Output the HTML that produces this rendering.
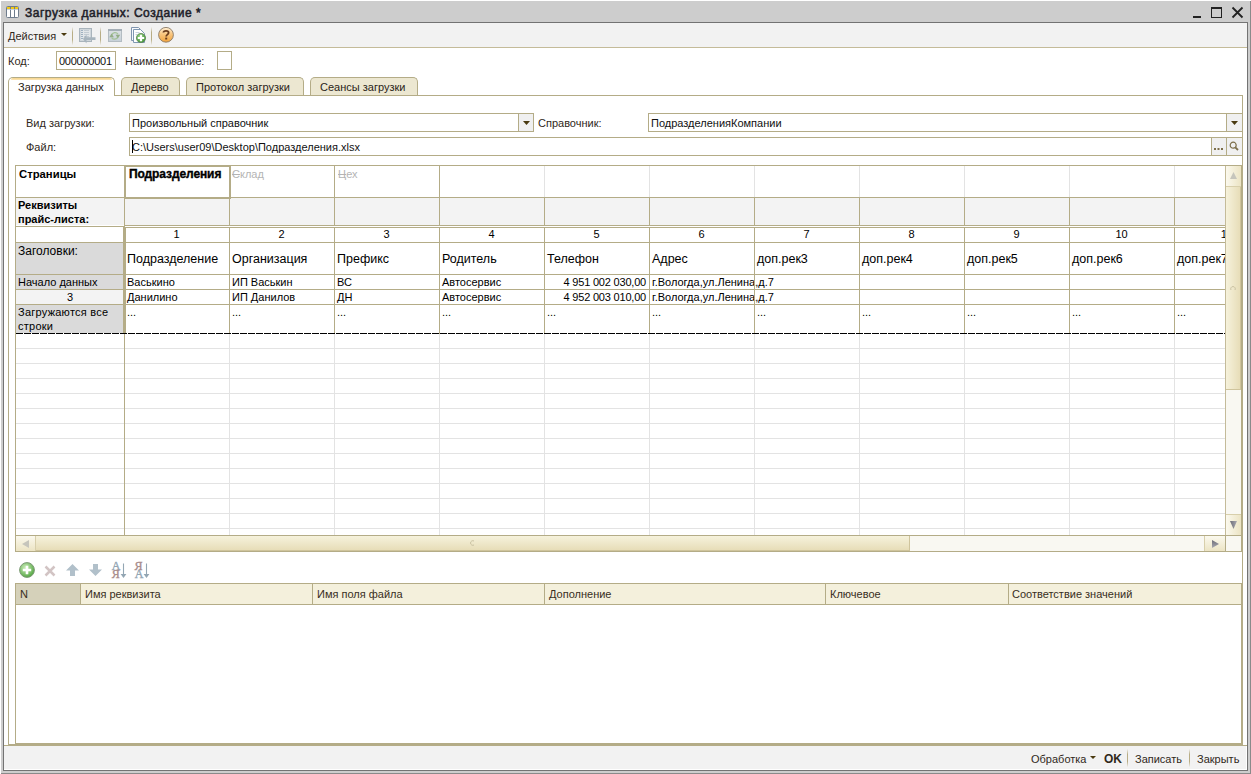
<!DOCTYPE html>
<html><head><meta charset="utf-8"><style>
html,body{margin:0;padding:0}
body{width:1251px;height:774px;position:relative;overflow:hidden;background:#fff;font-family:"Liberation Sans", sans-serif}
body>div,body>svg{position:absolute}
</style></head><body>
<div style="left:1px;top:1px;width:1250px;height:773px;background:#cdcdcd"></div>
<div style="left:1250px;top:1px;width:1px;height:773px;background:#8a8a8a"></div>
<div style="left:1px;top:773px;width:1250px;height:1px;background:#8a8a8a"></div>
<div style="left:3px;top:22px;width:1245px;height:749px;background:#fff;border:1px solid #737373;box-sizing:border-box"></div>
<svg style="left:6px;top:6px" width="13" height="12" viewBox="0 0 13 12">
<rect x="0.5" y="0.5" width="12" height="11" rx="1" fill="#fff" stroke="#6f7d8d"/>
<path d="M4.5 0.5V11.5M8.5 0.5V11.5" stroke="#6f7d8d"/>
<rect x="1" y="1" width="3" height="2" fill="#f2c814"/>
<rect x="5" y="1" width="3" height="2" fill="#f2c814"/>
<rect x="9" y="1" width="3" height="2" fill="#f2c814"/>
<rect x="1" y="3" width="11" height="0.8" fill="#b9c6d6"/>
</svg>
<div style="left:25px;top:6.84px;font-size:12px;line-height:12px;font-weight:normal;color:#202028;white-space:pre;-webkit-text-stroke:0.5px #202028;letter-spacing:0.52px;">Загрузка данных: Создание *</div>
<div style="left:1193px;top:16px;width:8px;height:2px;background:#222"></div>
<div style="left:1211px;top:7px;width:11px;height:11px;border:1px solid #222;border-top-width:2px;box-sizing:border-box"></div>
<svg style="left:1231px;top:6px" width="13" height="13" viewBox="0 0 13 13">
<path d="M1.5 1.5 L11.5 11.5 M11.5 1.5 L1.5 11.5" stroke="#222" stroke-width="1.8"/></svg>
<div style="left:4px;top:23px;width:1243px;height:24px;background:#f2f2f2"></div>
<div style="left:4px;top:47px;width:1243px;height:1px;background:#c4bb99"></div>
<div style="left:8px;top:30.69px;font-size:11px;line-height:11px;font-weight:normal;color:#30281a;white-space:pre;">Действия</div>
<svg style="left:61px;top:33px" width="6" height="3"><path d="M0 0H6L3 3Z" fill="#4a3a10"/></svg>
<div style="left:72px;top:27px;width:1px;height:18px;background:linear-gradient(#f0f0f0,#b8ad85 30%,#b8ad85 70%,#f0f0f0)"></div>
<div style="left:100px;top:27px;width:1px;height:18px;background:linear-gradient(#f0f0f0,#b8ad85 30%,#b8ad85 70%,#f0f0f0)"></div>
<div style="left:151px;top:27px;width:1px;height:18px;background:linear-gradient(#f0f0f0,#b8ad85 30%,#b8ad85 70%,#f0f0f0)"></div>
<svg style="left:76px;top:25px" width="22" height="20" viewBox="0 0 22 20">
<rect x="3.5" y="3.5" width="12" height="13" fill="#e2e6e9" stroke="#a9b4bc"/>
<rect x="4.5" y="4.5" width="10" height="11" fill="none" stroke="#d0d7dc"/>
<path d="M5 5.5h2M5 7.5h2M5 9.5h2M5 11.5h2M5 13.5h2" stroke="#9fb1c1"/>
<path d="M8 5.5h5M8 7.5h5M8 9.5h5M8 11.5h5" stroke="#c2cbd2"/>
<path d="M7 14 L10.5 9.5 V12.3 H19.5 V15 H10.5 V18.5 Z" fill="#a7b4bd"/>
</svg>
<svg style="left:107px;top:28px" width="16" height="15" viewBox="0 0 16 15">
<defs><linearGradient id="rg" x1="0" y1="0" x2="0" y2="1"><stop offset="0" stop-color="#dde2e5"/><stop offset="1" stop-color="#c6d0d8"/></linearGradient></defs>
<rect x="1.5" y="1.5" width="13" height="12" fill="url(#rg)" stroke="#b3bcc2"/>
<rect x="1" y="1" width="14" height="2" fill="#a4aeb6"/>
<path d="M4.6 7.2 A3.6 3.6 0 0 1 11 6.2" stroke="#a5c39a" stroke-width="1.2" fill="none"/>
<path d="M11 8.8 A3.6 3.6 0 0 1 4.6 9.6" stroke="#a5c39a" stroke-width="1.2" fill="none"/>
<path d="M2.3 9.2 L4.6 5.6 L6.9 9.2 Z" fill="#93ad86"/>
<path d="M8.5 6.8 L10.9 10.3 L13.2 6.8 Z" fill="#93ad86"/>
</svg>
<svg style="left:130px;top:26px" width="17" height="18" viewBox="0 0 17 18">
<path d="M1.5 1.5H8.5L10.5 3.5V14.5H1.5Z" fill="#f7f9fc" stroke="#8095ae"/>
<path d="M3.5 3.5H10.5L14.5 7.5V16.5H3.5Z" fill="#fff" stroke="#7f98b2"/>
<path d="M5.5 6.5h4M5.5 8.5h2" stroke="#c9d3de"/>
<defs><radialGradient id="cg" cx="40%" cy="35%" r="70%"><stop offset="0" stop-color="#9fd68a"/><stop offset="1" stop-color="#3c9233"/></radialGradient></defs>
<circle cx="11" cy="12" r="4.6" fill="url(#cg)" stroke="#5f8557" stroke-width="0.8"/>
<path d="M11 8.8V15.2M7.8 12H14.2" stroke="#fff" stroke-width="2.2"/>
</svg>
<svg style="left:158px;top:27px" width="16" height="16" viewBox="0 0 16 16">
<defs><linearGradient id="og" x1="0" y1="0" x2="0" y2="1"><stop offset="0" stop-color="#fff0d6"/><stop offset="0.45" stop-color="#f9c680"/><stop offset="1" stop-color="#f2a33c"/></linearGradient></defs>
<circle cx="8" cy="7.8" r="7.4" fill="url(#og)" stroke="#8b7a66" stroke-width="0.9"/>
<path d="M5.4 5.6 C5.4 3.4 10.6 3.2 10.6 5.8 C10.6 7.6 8.2 7.6 8.2 9.4" stroke="#6b3c1c" stroke-width="1.8" fill="none"/>
<rect x="7.2" y="10.6" width="2" height="1.9" fill="#6b3c1c"/>
</svg>
<div style="left:8px;top:55.69px;font-size:11px;line-height:11px;font-weight:normal;color:#30281a;white-space:pre;">Код:</div>
<div style="left:56px;top:51px;width:60px;height:19px;border:1px solid #b4ac87;box-sizing:border-box;background:#fff"></div>
<div style="left:59px;top:55.69px;font-size:11px;line-height:11px;font-weight:normal;color:#111;white-space:pre;letter-spacing:-0.25px;">000000001</div>
<div style="left:125px;top:55.69px;font-size:11px;line-height:11px;font-weight:normal;color:#30281a;white-space:pre;">Наименование:</div>
<div style="left:217px;top:51px;width:15px;height:19px;border:1px solid #b4ac87;box-sizing:border-box;background:#fff"></div>
<div style="left:8px;top:95px;width:1235px;height:1px;background:#b4ac87"></div>
<div style="left:8px;top:77px;width:107px;height:19px;box-sizing:border-box;border:1px solid #b4ac87;border-bottom:none;border-radius:5px 5px 0 0;background:#fff;z-index:2"></div>
<div style="left:11px;top:78px;width:101px;height:2px;background:linear-gradient(#f7d48a,#fbe6b8);border-radius:3px 3px 0 0;z-index:3"></div>
<div style="left:18px;top:81.69px;font-size:11px;line-height:11px;font-weight:normal;color:#2a2418;white-space:pre;z-index:4;">Загрузка данных</div>
<div style="left:9px;top:95px;width:105px;height:1px;background:#fff"></div>
<div style="left:121px;top:77px;width:59px;height:18px;box-sizing:border-box;border:1px solid #b4ac87;border-bottom:none;border-radius:5px 5px 0 0;background:#ece7d1;"></div>
<div style="left:131px;top:81.69px;font-size:11px;line-height:11px;font-weight:normal;color:#2a2418;white-space:pre;z-index:4;">Дерево</div>
<div style="left:186px;top:77px;width:118px;height:18px;box-sizing:border-box;border:1px solid #b4ac87;border-bottom:none;border-radius:5px 5px 0 0;background:#ece7d1;"></div>
<div style="left:196px;top:81.69px;font-size:11px;line-height:11px;font-weight:normal;color:#2a2418;white-space:pre;z-index:4;">Протокол загрузки</div>
<div style="left:310px;top:77px;width:108px;height:18px;box-sizing:border-box;border:1px solid #b4ac87;border-bottom:none;border-radius:5px 5px 0 0;background:#ece7d1;"></div>
<div style="left:320px;top:81.69px;font-size:11px;line-height:11px;font-weight:normal;color:#2a2418;white-space:pre;z-index:4;">Сеансы загрузки</div>
<div style="left:8px;top:95px;width:1px;height:650px;background:#b4ac87"></div>
<div style="left:1242px;top:95px;width:1px;height:650px;background:#b4ac87"></div>
<div style="left:8px;top:744px;width:1235px;height:1px;background:#b4ac87"></div>
<div style="left:4px;top:745px;width:1243px;height:1px;background:#b4ac87"></div>
<div style="left:4px;top:746px;width:1242px;height:23px;background:#f2f2f2"></div>
<div style="left:26px;top:117.69px;font-size:11px;line-height:11px;font-weight:normal;color:#30281a;white-space:pre;">Вид загрузки:</div>
<div style="left:129px;top:113px;width:405px;height:19px;border:1px solid #b4ac87;box-sizing:border-box;background:#fff"></div>
<div style="left:518px;top:114px;width:14px;height:17px;border-left:1px solid #b4ac87;background:#f0f0f0"></div>
<svg style="left:523px;top:121px" width="7" height="4"><path d="M0 0H7L3.5 4Z" fill="#4a3a10"/></svg>
<div style="left:132px;top:117.69px;font-size:11px;line-height:11px;font-weight:normal;color:#111;white-space:pre;">Произвольный справочник</div>
<div style="left:538px;top:117.69px;font-size:11px;line-height:11px;font-weight:normal;color:#30281a;white-space:pre;">Справочник:</div>
<div style="left:648px;top:113px;width:595px;height:19px;border:1px solid #b4ac87;box-sizing:border-box;background:#fff"></div>
<div style="left:1226px;top:114px;width:15px;height:17px;border-left:1px solid #b4ac87;background:#f0f0f0"></div>
<svg style="left:1231px;top:121px" width="7" height="4"><path d="M0 0H7L3.5 4Z" fill="#4a3a10"/></svg>
<div style="left:651px;top:117.69px;font-size:11px;line-height:11px;font-weight:normal;color:#111;white-space:pre;">ПодразделенияКомпании</div>
<div style="left:26px;top:141.69px;font-size:11px;line-height:11px;font-weight:normal;color:#30281a;white-space:pre;">Файл:</div>
<div style="left:129px;top:137px;width:1114px;height:19px;border:1px solid #b4ac87;box-sizing:border-box;background:#fff"></div>
<div style="left:1211px;top:138px;width:15px;height:17px;border-left:1px solid #b4ac87;background:#f0f0f0"></div>
<div style="left:1226px;top:138px;width:15px;height:17px;border-left:1px solid #b4ac87;background:#f0f0f0"></div>
<svg style="left:1214px;top:148px" width="10" height="3"><rect x="0" y="0" width="2" height="2" fill="#7d6f4a"/><rect x="3.5" y="0" width="2" height="2" fill="#7d6f4a"/><rect x="7" y="0" width="2" height="2" fill="#7d6f4a"/></svg>
<svg style="left:1229px;top:141px" width="10" height="10" viewBox="0 0 10 10"><circle cx="4.2" cy="4.2" r="3" fill="none" stroke="#7d6f4a" stroke-width="1.2"/><path d="M6.3 6.3L9 9" stroke="#7d6f4a" stroke-width="1.8"/></svg>
<div style="left:132px;top:141.69px;font-size:11px;line-height:11px;font-weight:normal;color:#111;white-space:pre;">C:\Users\user09\Desktop\Подразделения.xlsx</div>
<div style="left:132px;top:140px;width:1px;height:13px;background:#000"></div>
<div style="left:15px;top:165px;width:1227px;height:387px;border:1px solid #b4ac87;box-sizing:border-box;background:#fff"></div>
<div style="left:16px;top:198px;width:1209px;height:27px;background:#f3f3f3"></div>
<div style="left:16px;top:243px;width:108px;height:31px;background:#dadada"></div>
<div style="left:16px;top:275px;width:108px;height:14px;background:#dadada"></div>
<div style="left:16px;top:290px;width:108px;height:14px;background:#f3f3f3"></div>
<div style="left:16px;top:305px;width:108px;height:28px;background:#dadada"></div>
<div style="left:16px;top:348px;width:1209px;height:1px;background:#e3e3e3"></div>
<div style="left:16px;top:363px;width:1209px;height:1px;background:#e3e3e3"></div>
<div style="left:16px;top:378px;width:1209px;height:1px;background:#e3e3e3"></div>
<div style="left:16px;top:393px;width:1209px;height:1px;background:#e3e3e3"></div>
<div style="left:16px;top:408px;width:1209px;height:1px;background:#e3e3e3"></div>
<div style="left:16px;top:423px;width:1209px;height:1px;background:#e3e3e3"></div>
<div style="left:16px;top:438px;width:1209px;height:1px;background:#e3e3e3"></div>
<div style="left:16px;top:453px;width:1209px;height:1px;background:#e3e3e3"></div>
<div style="left:16px;top:468px;width:1209px;height:1px;background:#e3e3e3"></div>
<div style="left:16px;top:483px;width:1209px;height:1px;background:#e3e3e3"></div>
<div style="left:16px;top:498px;width:1209px;height:1px;background:#e3e3e3"></div>
<div style="left:16px;top:513px;width:1209px;height:1px;background:#e3e3e3"></div>
<div style="left:16px;top:528px;width:1209px;height:1px;background:#e3e3e3"></div>
<div style="left:124px;top:334px;width:1px;height:201px;background:#b4ac87"></div>
<div style="left:229px;top:334px;width:1px;height:201px;background:#e3e3e3"></div>
<div style="left:334px;top:334px;width:1px;height:201px;background:#e3e3e3"></div>
<div style="left:439px;top:334px;width:1px;height:201px;background:#e3e3e3"></div>
<div style="left:544px;top:334px;width:1px;height:201px;background:#e3e3e3"></div>
<div style="left:649px;top:334px;width:1px;height:201px;background:#e3e3e3"></div>
<div style="left:754px;top:334px;width:1px;height:201px;background:#e3e3e3"></div>
<div style="left:859px;top:334px;width:1px;height:201px;background:#e3e3e3"></div>
<div style="left:964px;top:334px;width:1px;height:201px;background:#e3e3e3"></div>
<div style="left:1069px;top:334px;width:1px;height:201px;background:#e3e3e3"></div>
<div style="left:1174px;top:334px;width:1px;height:201px;background:#e3e3e3"></div>
<div style="left:16px;top:197px;width:1209px;height:1px;background:#b4ac87"></div>
<div style="left:124px;top:225px;width:1101px;height:1px;background:#b4ac87"></div>
<div style="left:124px;top:227px;width:1101px;height:1px;background:#b4ac87"></div>
<div style="left:16px;top:226px;width:108px;height:1px;background:#b4ac87"></div>
<div style="left:124px;top:225px;width:1px;height:3px;background:#b4ac87"></div>
<div style="left:16px;top:242px;width:1209px;height:1px;background:#b4ac87"></div>
<div style="left:16px;top:274px;width:1209px;height:1px;background:#b4ac87"></div>
<div style="left:16px;top:289px;width:1209px;height:1px;background:#b4ac87"></div>
<div style="left:16px;top:304px;width:1209px;height:1px;background:#b4ac87"></div>
<div style="left:124px;top:166px;width:1px;height:31px;background:#b4ac87"></div>
<div style="left:124px;top:198px;width:1px;height:27px;background:#b4ac87"></div>
<div style="left:124px;top:227px;width:1px;height:107px;background:#b4ac87"></div>
<div style="left:229px;top:166px;width:1px;height:31px;background:#b4ac87"></div>
<div style="left:229px;top:198px;width:1px;height:27px;background:#b4ac87"></div>
<div style="left:229px;top:227px;width:1px;height:107px;background:#b4ac87"></div>
<div style="left:334px;top:166px;width:1px;height:31px;background:#b4ac87"></div>
<div style="left:334px;top:198px;width:1px;height:27px;background:#b4ac87"></div>
<div style="left:334px;top:227px;width:1px;height:107px;background:#b4ac87"></div>
<div style="left:439px;top:166px;width:1px;height:31px;background:#b4ac87"></div>
<div style="left:439px;top:198px;width:1px;height:27px;background:#b4ac87"></div>
<div style="left:439px;top:227px;width:1px;height:107px;background:#b4ac87"></div>
<div style="left:544px;top:166px;width:1px;height:31px;background:#e3e3e3"></div>
<div style="left:544px;top:198px;width:1px;height:27px;background:#b4ac87"></div>
<div style="left:544px;top:227px;width:1px;height:107px;background:#b4ac87"></div>
<div style="left:649px;top:166px;width:1px;height:31px;background:#e3e3e3"></div>
<div style="left:649px;top:198px;width:1px;height:27px;background:#b4ac87"></div>
<div style="left:649px;top:227px;width:1px;height:107px;background:#b4ac87"></div>
<div style="left:754px;top:166px;width:1px;height:31px;background:#e3e3e3"></div>
<div style="left:754px;top:198px;width:1px;height:27px;background:#b4ac87"></div>
<div style="left:754px;top:227px;width:1px;height:107px;background:#b4ac87"></div>
<div style="left:859px;top:166px;width:1px;height:31px;background:#e3e3e3"></div>
<div style="left:859px;top:198px;width:1px;height:27px;background:#b4ac87"></div>
<div style="left:859px;top:227px;width:1px;height:107px;background:#b4ac87"></div>
<div style="left:964px;top:166px;width:1px;height:31px;background:#e3e3e3"></div>
<div style="left:964px;top:198px;width:1px;height:27px;background:#b4ac87"></div>
<div style="left:964px;top:227px;width:1px;height:107px;background:#b4ac87"></div>
<div style="left:1069px;top:166px;width:1px;height:31px;background:#e3e3e3"></div>
<div style="left:1069px;top:198px;width:1px;height:27px;background:#b4ac87"></div>
<div style="left:1069px;top:227px;width:1px;height:107px;background:#b4ac87"></div>
<div style="left:1174px;top:166px;width:1px;height:31px;background:#e3e3e3"></div>
<div style="left:1174px;top:198px;width:1px;height:27px;background:#b4ac87"></div>
<div style="left:1174px;top:227px;width:1px;height:107px;background:#b4ac87"></div>
<div style="left:125px;top:227px;width:1px;height:107px;background:#b4ac87"></div>
<div style="left:123px;top:227px;width:1px;height:107px;background:#b4ac87"></div>
<div style="left:124px;top:165px;width:107px;height:34px;border:2px solid #b4ac87;box-sizing:border-box"></div>
<div style="left:16px;top:333px;width:1209px;height:1px;background:repeating-linear-gradient(90deg,#000 0 7px,transparent 7px 8px)"></div>
<div style="left:19px;top:169.03px;font-size:11.3px;line-height:11.3px;font-weight:bold;color:#000;white-space:pre;">Страницы</div>
<div style="left:129px;top:167.84px;font-size:12px;line-height:12px;font-weight:bold;color:#000;white-space:pre;-webkit-text-stroke:0.35px #000;letter-spacing:-0.1px;">Подразделения</div>
<div style="left:232px;top:168.69px;font-size:11px;line-height:11px;font-weight:normal;color:#b4b4b4;white-space:pre;"><s>С</s>клад</div>
<div style="left:338px;top:168.69px;font-size:11px;line-height:11px;font-weight:normal;color:#b4b4b4;white-space:pre;"><s>Ц</s>ех</div>
<div style="left:18px;top:199.69px;font-size:11px;line-height:11px;font-weight:bold;color:#000;white-space:pre;">Реквизиты</div>
<div style="left:18px;top:213.69px;font-size:11px;line-height:11px;font-weight:bold;color:#000;white-space:pre;">прайс-листа:</div>
<div style="left:124px;top:228.69px;font-size:11px;line-height:11px;font-weight:normal;color:#000;white-space:pre;width:105px;text-align:center;">1</div>
<div style="left:229px;top:228.69px;font-size:11px;line-height:11px;font-weight:normal;color:#000;white-space:pre;width:105px;text-align:center;">2</div>
<div style="left:334px;top:228.69px;font-size:11px;line-height:11px;font-weight:normal;color:#000;white-space:pre;width:105px;text-align:center;">3</div>
<div style="left:439px;top:228.69px;font-size:11px;line-height:11px;font-weight:normal;color:#000;white-space:pre;width:105px;text-align:center;">4</div>
<div style="left:544px;top:228.69px;font-size:11px;line-height:11px;font-weight:normal;color:#000;white-space:pre;width:105px;text-align:center;">5</div>
<div style="left:649px;top:228.69px;font-size:11px;line-height:11px;font-weight:normal;color:#000;white-space:pre;width:105px;text-align:center;">6</div>
<div style="left:754px;top:228.69px;font-size:11px;line-height:11px;font-weight:normal;color:#000;white-space:pre;width:105px;text-align:center;">7</div>
<div style="left:859px;top:228.69px;font-size:11px;line-height:11px;font-weight:normal;color:#000;white-space:pre;width:105px;text-align:center;">8</div>
<div style="left:964px;top:228.69px;font-size:11px;line-height:11px;font-weight:normal;color:#000;white-space:pre;width:105px;text-align:center;">9</div>
<div style="left:1069px;top:228.69px;font-size:11px;line-height:11px;font-weight:normal;color:#000;white-space:pre;width:105px;text-align:center;">10</div>
<div style="left:1174px;top:228.69px;font-size:11px;line-height:11px;font-weight:normal;color:#000;white-space:pre;width:105px;text-align:center;">11</div>
<div style="left:18px;top:244.84px;font-size:12px;line-height:12px;font-weight:normal;color:#000;white-space:pre;">Заголовки:</div>
<div style="left:127px;top:252.92px;font-size:12.5px;line-height:12.5px;font-weight:normal;color:#000;white-space:pre;">Подразделение</div>
<div style="left:232px;top:252.92px;font-size:12.5px;line-height:12.5px;font-weight:normal;color:#000;white-space:pre;">Организация</div>
<div style="left:337px;top:252.92px;font-size:12.5px;line-height:12.5px;font-weight:normal;color:#000;white-space:pre;">Префикс</div>
<div style="left:442px;top:252.92px;font-size:12.5px;line-height:12.5px;font-weight:normal;color:#000;white-space:pre;">Родитель</div>
<div style="left:547px;top:252.92px;font-size:12.5px;line-height:12.5px;font-weight:normal;color:#000;white-space:pre;">Телефон</div>
<div style="left:652px;top:252.92px;font-size:12.5px;line-height:12.5px;font-weight:normal;color:#000;white-space:pre;">Адрес</div>
<div style="left:757px;top:252.92px;font-size:12.5px;line-height:12.5px;font-weight:normal;color:#000;white-space:pre;">доп.рек3</div>
<div style="left:862px;top:252.92px;font-size:12.5px;line-height:12.5px;font-weight:normal;color:#000;white-space:pre;">доп.рек4</div>
<div style="left:967px;top:252.92px;font-size:12.5px;line-height:12.5px;font-weight:normal;color:#000;white-space:pre;">доп.рек5</div>
<div style="left:1072px;top:252.92px;font-size:12.5px;line-height:12.5px;font-weight:normal;color:#000;white-space:pre;">доп.рек6</div>
<div style="left:1177px;top:252.92px;font-size:12.5px;line-height:12.5px;font-weight:normal;color:#000;white-space:pre;">доп.рек7</div>
<div style="left:18px;top:276.69px;font-size:11px;line-height:11px;font-weight:normal;color:#000;white-space:pre;">Начало данных</div>
<div style="left:16px;top:291.69px;font-size:11px;line-height:11px;font-weight:normal;color:#000;white-space:pre;width:108px;text-align:center;">3</div>
<div style="left:18px;top:306.69px;font-size:11px;line-height:11px;font-weight:normal;color:#000;white-space:pre;letter-spacing:0.25px;">Загружаются все</div>
<div style="left:18px;top:320.69px;font-size:11px;line-height:11px;font-weight:normal;color:#000;white-space:pre;letter-spacing:0.25px;">строки</div>
<div style="left:127px;top:276.69px;font-size:11px;line-height:11px;font-weight:normal;color:#000;white-space:pre;">Васькино</div>
<div style="left:232px;top:276.69px;font-size:11px;line-height:11px;font-weight:normal;color:#000;white-space:pre;">ИП Васькин</div>
<div style="left:337px;top:276.69px;font-size:11px;line-height:11px;font-weight:normal;color:#000;white-space:pre;">ВС</div>
<div style="left:442px;top:276.69px;font-size:11px;line-height:11px;font-weight:normal;color:#000;white-space:pre;">Автосервис</div>
<div style="left:544px;top:276.69px;font-size:11px;line-height:11px;font-weight:normal;color:#000;white-space:pre;letter-spacing:-0.2px;width:102px;text-align:right;">4 951 002 030,00</div>
<div style="left:652px;top:276.69px;font-size:11px;line-height:11px;font-weight:normal;color:#000;white-space:pre;">г.Вологда,ул.Ленина,д.7</div>
<div style="left:127px;top:291.69px;font-size:11px;line-height:11px;font-weight:normal;color:#000;white-space:pre;">Данилино</div>
<div style="left:232px;top:291.69px;font-size:11px;line-height:11px;font-weight:normal;color:#000;white-space:pre;">ИП Данилов</div>
<div style="left:337px;top:291.69px;font-size:11px;line-height:11px;font-weight:normal;color:#000;white-space:pre;">ДН</div>
<div style="left:442px;top:291.69px;font-size:11px;line-height:11px;font-weight:normal;color:#000;white-space:pre;">Автосервис</div>
<div style="left:544px;top:291.69px;font-size:11px;line-height:11px;font-weight:normal;color:#000;white-space:pre;letter-spacing:-0.2px;width:102px;text-align:right;">4 952 003 010,00</div>
<div style="left:652px;top:291.69px;font-size:11px;line-height:11px;font-weight:normal;color:#000;white-space:pre;">г.Вологда,ул.Ленина,д.7</div>
<div style="left:127px;top:306.69px;font-size:11px;line-height:11px;font-weight:normal;color:#000;white-space:pre;">...</div>
<div style="left:232px;top:306.69px;font-size:11px;line-height:11px;font-weight:normal;color:#000;white-space:pre;">...</div>
<div style="left:337px;top:306.69px;font-size:11px;line-height:11px;font-weight:normal;color:#000;white-space:pre;">...</div>
<div style="left:442px;top:306.69px;font-size:11px;line-height:11px;font-weight:normal;color:#000;white-space:pre;">...</div>
<div style="left:547px;top:306.69px;font-size:11px;line-height:11px;font-weight:normal;color:#000;white-space:pre;">...</div>
<div style="left:652px;top:306.69px;font-size:11px;line-height:11px;font-weight:normal;color:#000;white-space:pre;">...</div>
<div style="left:757px;top:306.69px;font-size:11px;line-height:11px;font-weight:normal;color:#000;white-space:pre;">...</div>
<div style="left:862px;top:306.69px;font-size:11px;line-height:11px;font-weight:normal;color:#000;white-space:pre;">...</div>
<div style="left:967px;top:306.69px;font-size:11px;line-height:11px;font-weight:normal;color:#000;white-space:pre;">...</div>
<div style="left:1072px;top:306.69px;font-size:11px;line-height:11px;font-weight:normal;color:#000;white-space:pre;">...</div>
<div style="left:1177px;top:306.69px;font-size:11px;line-height:11px;font-weight:normal;color:#000;white-space:pre;">...</div>
<div style="left:754px;top:275px;width:1px;height:29px;background:#b4ac87"></div>
<div style="left:1225px;top:166px;width:16px;height:369px;background:#f9f8f2"></div>
<div style="left:1225px;top:166px;width:1px;height:369px;background:#c4bb99"></div>
<div style="left:1226px;top:166px;width:15px;height:21px;background:linear-gradient(90deg,#fbf9ee,#ece4c4);border-bottom:1px solid #d8cfab;box-sizing:border-box"></div>
<svg style="left:1230px;top:172px" width="7" height="7"><path d="M0 7H7L3.5 0Z" fill="#c6c5bc"/></svg>
<div style="left:1226px;top:187px;width:15px;height:203px;background:linear-gradient(90deg,#f6f2dc,#e7ddb8);border-right:1px solid #cfc49c;border-bottom:1px solid #cfc49c;box-sizing:border-box"></div>
<div style="left:1226px;top:514px;width:15px;height:21px;background:linear-gradient(90deg,#fbf9ee,#ece4c4);border-top:1px solid #d8cfab;box-sizing:border-box"></div>
<svg style="left:1230px;top:521px" width="7" height="8"><defs><linearGradient id="ag1" x1="0" y1="0" x2="1" y2="0"><stop offset="0" stop-color="#6e6e78"/><stop offset="1" stop-color="#a8a8b0"/></linearGradient></defs><path d="M0 0H7L3.5 8Z" fill="url(#ag1)"/></svg>
<div style="left:16px;top:535px;width:1226px;height:17px;background:#f9f8f2"></div>
<div style="left:16px;top:535px;width:1226px;height:1px;background:#b4ac87"></div>
<div style="left:16px;top:536px;width:20px;height:15px;background:linear-gradient(#fbf9ee,#ece4c4);border-right:1px solid #d8cfab;box-sizing:border-box"></div>
<svg style="left:22px;top:540px" width="7" height="8"><path d="M7 0V8L0 4Z" fill="#c6c5bc"/></svg>
<div style="left:36px;top:536px;width:874px;height:15px;background:linear-gradient(#f6f2dc,#e7ddb8);border-right:1px solid #cfc49c;border-bottom:1px solid #cfc49c;box-sizing:border-box"></div>
<div style="left:1204px;top:536px;width:21px;height:15px;background:linear-gradient(#fbf9ee,#ece4c4);border-left:1px solid #d8cfab;box-sizing:border-box"></div>
<svg style="left:1212px;top:540px" width="7" height="8"><defs><linearGradient id="ag2" x1="0" y1="0" x2="0" y2="1"><stop offset="0" stop-color="#6e6e78"/><stop offset="1" stop-color="#a8a8b0"/></linearGradient></defs><path d="M0 0V8L7 4Z" fill="url(#ag2)"/></svg>
<div style="left:1225px;top:535px;width:1px;height:16px;background:#b4ac87"></div>
<div style="left:1226px;top:536px;width:15px;height:15px;background:#f9f8f2"></div>
<div style="left:1241px;top:165px;width:1px;height:387px;background:#b4ac87"></div>
<div style="left:15px;top:551px;width:1227px;height:1px;background:#b4ac87"></div>
<svg style="left:19px;top:562px" width="16" height="16" viewBox="0 0 16 16">
<defs><radialGradient id="gg" cx="40%" cy="35%" r="65%"><stop offset="0" stop-color="#cdeebb"/><stop offset="1" stop-color="#56a845"/></radialGradient></defs>
<circle cx="8" cy="8" r="7.4" fill="url(#gg)" stroke="#7d9a76"/>
<path d="M8 3.8V12.2M3.8 8H12.2" stroke="#fff" stroke-width="2.6"/>
</svg>
<svg style="left:44px;top:565px" width="12" height="12" viewBox="0 0 12 12"><path d="M1.5 1.5L10.5 10.5M10.5 1.5L1.5 10.5" stroke="#d2c4c4" stroke-width="2.5"/></svg>
<svg style="left:65px;top:564px" width="15" height="12" viewBox="0 0 15 12"><path d="M7.5 0L14 6.5H10V12H5V6.5H1Z" fill="#b1c0ca"/></svg>
<svg style="left:88px;top:564px" width="15" height="12" viewBox="0 0 15 12"><path d="M7.5 12L14 5.5H10V0H5V5.5H1Z" fill="#b1c0ca"/></svg>
<svg style="left:108px;top:558px" width="46" height="24" viewBox="0 0 46 24">
<g font-family="Liberation Serif" font-size="12" text-anchor="middle" stroke-width="0.35">
<text x="8" y="12" fill="#93a6b3" stroke="#93a6b3">A</text>
<text x="7.8" y="20.2" fill="#a88c8c" stroke="#a88c8c">Я</text>
<text x="30.5" y="12" fill="#a88c8c" stroke="#a88c8c">Я</text>
<text x="31" y="20.2" fill="#93a6b3" stroke="#93a6b3">A</text>
</g>
<path d="M15.5 5.5V17M38.5 5.5V17" stroke="#93a6b3" stroke-width="1.1"/>
<path d="M12.6 16H18.4L15.5 20Z M35.6 16H41.4L38.5 20Z" fill="#93a6b3"/>
</svg>
<svg style="left:470px;top:540px" width="5" height="6"><path d="M4 1 A2.3 2.3 0 1 0 4 5" stroke="#c9c1a2" fill="none"/></svg>
<svg style="left:1230px;top:286px" width="6" height="5"><path d="M1 4 A2.3 2.3 0 1 1 5 4" stroke="#c9c1a2" fill="none"/></svg>
<div style="left:15px;top:583px;width:1227px;height:161px;border:1px solid #b4ac87;box-sizing:border-box;background:#fff"></div>
<div style="left:16px;top:584px;width:1225px;height:20px;background:#f4f0dc"></div>
<div style="left:16px;top:584px;width:64px;height:20px;background:#d5d1ba"></div>
<div style="left:16px;top:604px;width:1225px;height:1px;background:#b4ac87"></div>
<div style="left:80px;top:584px;width:1px;height:20px;background:#b4ac87"></div>
<div style="left:312px;top:584px;width:1px;height:20px;background:#b4ac87"></div>
<div style="left:544px;top:584px;width:1px;height:20px;background:#b4ac87"></div>
<div style="left:825px;top:584px;width:1px;height:20px;background:#b4ac87"></div>
<div style="left:1008px;top:584px;width:1px;height:20px;background:#b4ac87"></div>
<div style="left:20px;top:588.69px;font-size:11px;line-height:11px;font-weight:normal;color:#382e1c;white-space:pre;">N</div>
<div style="left:85px;top:588.69px;font-size:11px;line-height:11px;font-weight:normal;color:#382e1c;white-space:pre;">Имя реквизита</div>
<div style="left:317px;top:588.69px;font-size:11px;line-height:11px;font-weight:normal;color:#382e1c;white-space:pre;">Имя поля файла</div>
<div style="left:549px;top:588.69px;font-size:11px;line-height:11px;font-weight:normal;color:#382e1c;white-space:pre;">Дополнение</div>
<div style="left:830px;top:588.69px;font-size:11px;line-height:11px;font-weight:normal;color:#382e1c;white-space:pre;">Ключевое</div>
<div style="left:1012px;top:588.69px;font-size:11px;line-height:11px;font-weight:normal;color:#382e1c;white-space:pre;">Соответствие значений</div>
<div style="left:1031px;top:753.69px;font-size:11px;line-height:11px;font-weight:normal;color:#30281a;white-space:pre;">Обработка</div>
<svg style="left:1090px;top:756px" width="6" height="3"><path d="M0 0H6L3 3Z" fill="#4a3a10"/></svg>
<div style="left:1104px;top:752.84px;font-size:12px;line-height:12px;font-weight:bold;color:#30281a;white-space:pre;">OK</div>
<div style="left:1127px;top:749px;width:1px;height:18px;background:linear-gradient(#f0f0f0,#b8ad85 30%,#b8ad85 70%,#f0f0f0)"></div>
<div style="left:1189px;top:749px;width:1px;height:18px;background:linear-gradient(#f0f0f0,#b8ad85 30%,#b8ad85 70%,#f0f0f0)"></div>
<div style="left:1135px;top:753.69px;font-size:11px;line-height:11px;font-weight:normal;color:#30281a;white-space:pre;">Записать</div>
<div style="left:1197px;top:753.69px;font-size:11px;line-height:11px;font-weight:normal;color:#30281a;white-space:pre;">Закрыть</div>
</body></html>
